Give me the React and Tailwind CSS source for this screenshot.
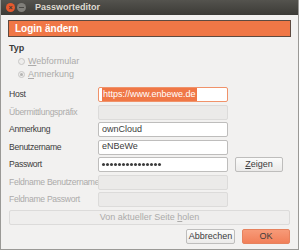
import React from 'react';

const font = { fontFamily: '"Liberation Sans", Arial, sans-serif' };

const Field = ({ label, disabled, value, focused, children }) => (
  <div className="flex items-center h-[15px]">
    <span className={`w-[97px] shrink-0 pl-[8px] text-[8.6px] tracking-[-0.3px] whitespace-nowrap ${disabled ? 'text-[#acabaa]' : 'text-[#3c3c3c]'}`}>
      {label}
    </span>
    <div
      className={`w-[130px] h-[15px] shrink-0 rounded-[2px] border flex items-center px-[3px] text-[9px] text-[#3c3c3c] overflow-hidden whitespace-nowrap ${
        focused
          ? 'border-[#f0926a] bg-white'
          : disabled
          ? 'border-[#dcdbda] bg-[#ebeae9]'
          : 'border-[#bebdbc] bg-white'
      }`}
    >
      {value}
    </div>
    {children}
  </div>
);

const Radio = ({ label, checked, u }) => (
  <div className="flex items-center h-[13px] pl-[17px] gap-[3px]">
    <span className="w-[7px] h-[7px] rounded-full border border-[#c8c7c6] bg-[#eeedec] flex items-center justify-center">
      {checked && <span className="w-[3px] h-[3px] rounded-full bg-[#b5b4b3]" />}
    </span>
    <span className="text-[9px] text-[#acabaa]">
      <span className="underline">{u}</span>
      {label}
    </span>
  </div>
);

const Dots = () => (
  <span className="flex gap-[1px]">
    {Array.from({ length: 15 }).map((_, i) => (
      <span key={i} className="w-[3px] h-[3px] rounded-full bg-[#3c3c3c]" />
    ))}
  </span>
);

export default function App() {
  return (
    <div className="w-[300px] h-[251px] bg-white" style={font}>
      <div className="w-[299px] h-[250px] flex flex-col border border-[#9a9996] border-t-0 bg-[#f2f1f0]">
        {/* title bar */}
        <div className="h-[15px] shrink-0 flex items-center bg-gradient-to-b from-[#54534e] to-[#3c3b37] pl-[5px]">
          <span className="w-[9px] h-[9px] rounded-full bg-[#e6592e] flex items-center justify-center text-[#3c3b37] text-[7px] leading-none font-bold">
            ×
          </span>
          <span className="ml-[2px] w-[9px] h-[9px] rounded-full bg-[#807f7a] flex items-center justify-center">
            <span className="w-[5px] h-[1px] bg-[#4a4945]" />
          </span>
          <span className="ml-[9px] text-[#dfdbd2] text-[9px] font-bold">Passworteditor</span>
        </div>

        <div className="flex flex-col pt-[5px]">
          <div className="mx-[7px] h-[17px] bg-[#f07746] border border-[#5e4a40] flex items-center pl-[6px]">
            <span className="text-white font-bold text-[10px]">Login ändern</span>
          </div>

          <div className="mt-[6px] pl-[8px] h-[12px] flex items-center text-[9px] font-bold text-[#3c3c3c]">Typ</div>
          <Radio u="W" label="ebformular" />
          <Radio u="A" label="nmerkung" checked />

          <div className="mt-[6px] flex flex-col gap-[2.5px]">
            <Field
              label="Host"
              focused
              value={<span className="bg-[#f07746] text-white px-[1px]">https://www.enbewe.de</span>}
            />
            <Field label="Übermittlungspräfix" disabled />
            <Field label="Anmerkung" value="ownCloud" />
            <Field label="Benutzername" value="eNBeWe" />
            <Field label="Passwort" value={<Dots />}>
              <button className="ml-[7px] w-[48px] h-[15px] rounded-[2px] border border-[#bebdbc] bg-gradient-to-b from-[#fbfbfa] to-[#ebeae9] text-[9px] text-[#3c3c3c]">
                <span className="underline">Z</span>eigen
              </button>
            </Field>
            <Field label="Feldname Benutzername" disabled />
            <Field label="Feldname Passwort" disabled />
          </div>

          <div className="mt-[3px] mx-[8px] h-[15px] rounded-[2px] border border-[#dcdbda] bg-[#efeeed] flex items-center justify-center text-[9px] text-[#acabaa]">
            Von aktueller Seite <span className="underline ml-[2.5px]">h</span>olen
          </div>

          <div className="mt-[4px] flex justify-end gap-[7px] pr-[8px]">
            <button className="w-[49px] h-[15px] rounded-[2px] border border-[#bebdbc] bg-gradient-to-b from-[#fbfbfa] to-[#ebeae9] text-[9px] text-[#3c3c3c]">
              Abbrechen
            </button>
            <button className="w-[48px] h-[15px] rounded-[2px] border border-[#e6825e] bg-gradient-to-b from-[#f79a78] to-[#f17f58] text-[9px] text-[#3c3c3c]">
              OK
            </button>
          </div>
        </div>
      </div>
    </div>
  );
}
